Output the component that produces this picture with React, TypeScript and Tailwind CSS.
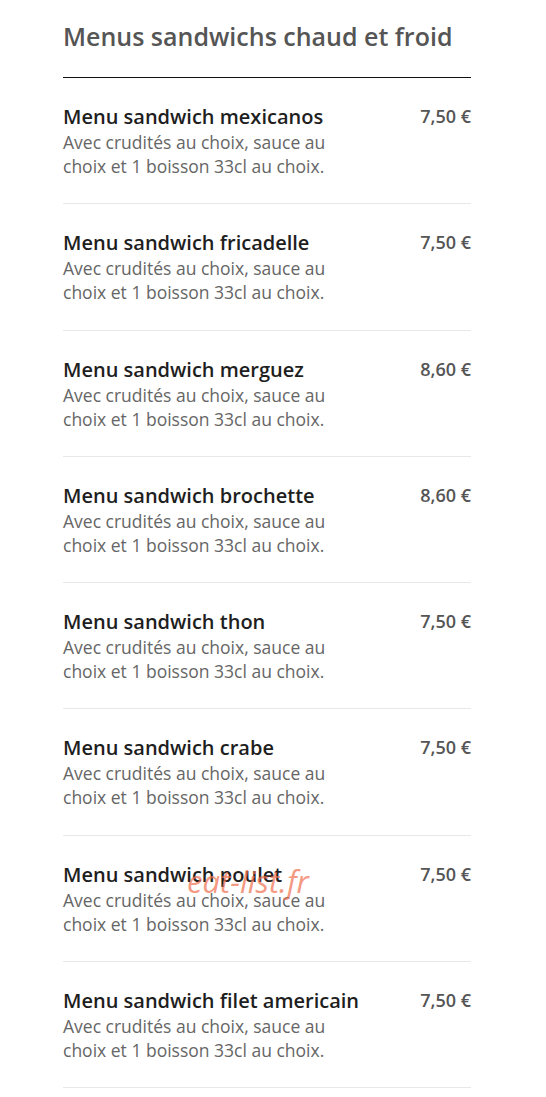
import React from "react";

const items = [
  { name: "Menu sandwich mexicanos", price: "7,50 €" },
  { name: "Menu sandwich fricadelle", price: "7,50 €" },
  { name: "Menu sandwich merguez", price: "8,60 €" },
  { name: "Menu sandwich brochette", price: "8,60 €" },
  { name: "Menu sandwich thon", price: "7,50 €" },
  { name: "Menu sandwich crabe", price: "7,50 €" },
  { name: "Menu sandwich poulet", price: "7,50 €" },
  { name: "Menu sandwich filet americain", price: "7,50 €" },
];

export default function App() {
  return (
    <div
      className="relative w-[546px] min-h-[1097px] bg-white pt-[18px]"
      style={{ fontFamily: '"Open Sans", sans-serif' }}
    >
      <div className="ml-[63px] w-[408px]">
        <h1 className="text-[25px] leading-[36px] font-semibold text-[#555555]">
          Menus sandwichs chaud et froid
        </h1>
        <div className="mt-[23px] h-[1px] bg-[#111111]" />
        {items.map((it) => (
          <div
            key={it.name}
            className="flex justify-between pt-[25px] pb-[25.3px] border-b border-[#e8e8e8]"
          >
            <div>
              <div className="text-[20px] leading-[27px] font-semibold text-[#1e1e1e]">
                {it.name}
              </div>
              <div className="max-w-[290px] text-[17.5px] leading-[24px] text-[#666666]">
                Avec crudités au choix, sauce au choix et 1 boisson 33cl au choix.
              </div>
            </div>
            <div className="text-[18px] leading-[26px] font-semibold text-[#555555]">
              {it.price}
            </div>
          </div>
        ))}
      </div>
      <div className="absolute left-[187px] top-[858px] text-[31px] italic text-[#f07050] opacity-70 pointer-events-none">
        eat-list.fr
      </div>
    </div>
  );
}
